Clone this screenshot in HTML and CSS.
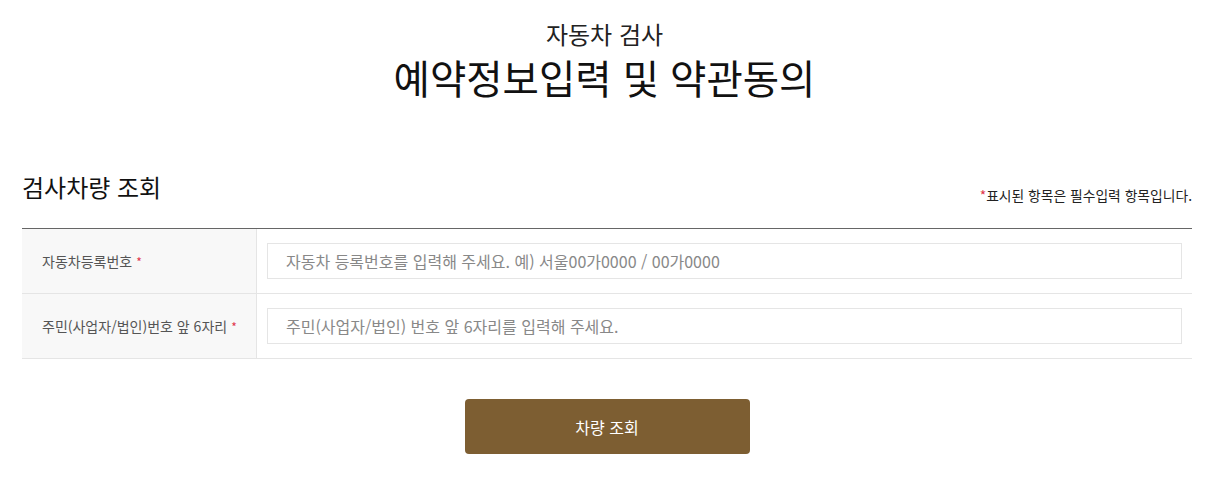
FILE: index.html
```html
<!DOCTYPE html>
<html lang="ko">
<head>
    <meta charset="UTF-8">
    <meta name="viewport" content="width=device-width, initial-scale=1.0">
    <title>예약정보입력 및 약관동의</title>
    <link rel="stylesheet" href="styles.css">
</head>
<body>
    <!-- 페이지 제목 -->
    <div class="page-head">
        <p class="page-sub">자동차 검사</p>
        <h1 class="page-title">예약정보입력 및 약관동의</h1>
    </div>

    <div class="content">
        <!-- 검사차량 조회 -->
        <div class="section-head">
            <h2 class="section-title">검사차량 조회</h2>
            <p class="required-note"><span class="star">*</span>표시된 항목은 필수입력 항목입니다.</p>
        </div>

        <div class="form-table">
            <div class="form-row">
                <div class="form-label">자동차등록번호 <span class="star">*</span></div>
                <div class="form-field">
                    <input type="text" class="text-input" placeholder="자동차 등록번호를 입력해 주세요. 예) 서울00가0000 / 00가0000">
                </div>
            </div>
            <div class="form-row">
                <div class="form-label">주민(사업자/법인)번호 앞 6자리 <span class="star">*</span></div>
                <div class="form-field">
                    <input type="text" class="text-input" placeholder="주민(사업자/법인) 번호 앞 6자리를 입력해 주세요.">
                </div>
            </div>
        </div>

        <div class="btn-area">
            <button type="button" class="btn-search">차량 조회</button>
        </div>
    </div>
</body>
</html>
```

FILE: styles.css
```css
/* 전체 레이아웃 */
body {
    margin: 0;
    padding: 0;
    font-family: "Noto Sans CJK KR", "Noto Sans", sans-serif;
    color: #111;
    background-color: #fff;
}
/* 페이지 제목 */
.page-head {
    text-align: center;
    padding-top: 16px;
}
.page-sub {
    margin: 0;
    font-size: 24px;
    line-height: 36px;
    font-weight: 400;
    color: #222;
}
.page-title {
    margin: -2px 0 2px;
    font-size: 39.5px;
    line-height: 54px;
    font-weight: 400;
    color: #111;
}
/* 본문 */
.content {
    padding: 0 17px 0 22px;
}
.section-head {
    display: flex;
    justify-content: space-between;
    align-items: flex-end;
    margin-top: 67px;
    padding-bottom: 25px;
}
.section-title {
    margin: 0;
    font-size: 24px;
    line-height: 32px;
    font-weight: 400;
}
.required-note {
    margin: 0 0 -2px;
    font-size: 13.8px;
    line-height: 20px;
    color: #222;
}
.star {
    color: #e0364b;
}
/* 입력 표 */
.form-table {
    border-top: 1px solid #666;
}
.form-row {
    display: flex;
    height: 64px;
    border-bottom: 1px solid #e5e5e5;
}
.form-label {
    width: 214px;
    flex: none;
    padding-left: 20px;
    display: flex;
    align-items: center;
    gap: 4px;
    background-color: #f8f8f8;
    border-right: 1px solid #e5e5e5;
    font-size: 14px;
    color: #555;
}
.form-label .star {
    font-size: 12px;
}
.form-field {
    flex: 1;
    display: flex;
    align-items: center;
    padding: 0 10px;
}
.text-input {
    width: 100%;
    height: 36px;
    box-sizing: border-box;
    border: 1px solid #e5e5e5;
    padding: 0 18px;
    font-family: inherit;
    font-size: 16px;
    color: #333;
    outline: none;
}
.text-input::placeholder {
    color: #888;
}
/* 버튼 */
.btn-area {
    display: flex;
    justify-content: center;
    padding-top: 40px;
}
.btn-search {
    width: 285px;
    height: 55px;
    border: none;
    border-radius: 4px;
    background-color: #7d5e32;
    color: #fff;
    font-family: inherit;
    font-size: 16px;
    cursor: pointer;
}
```
